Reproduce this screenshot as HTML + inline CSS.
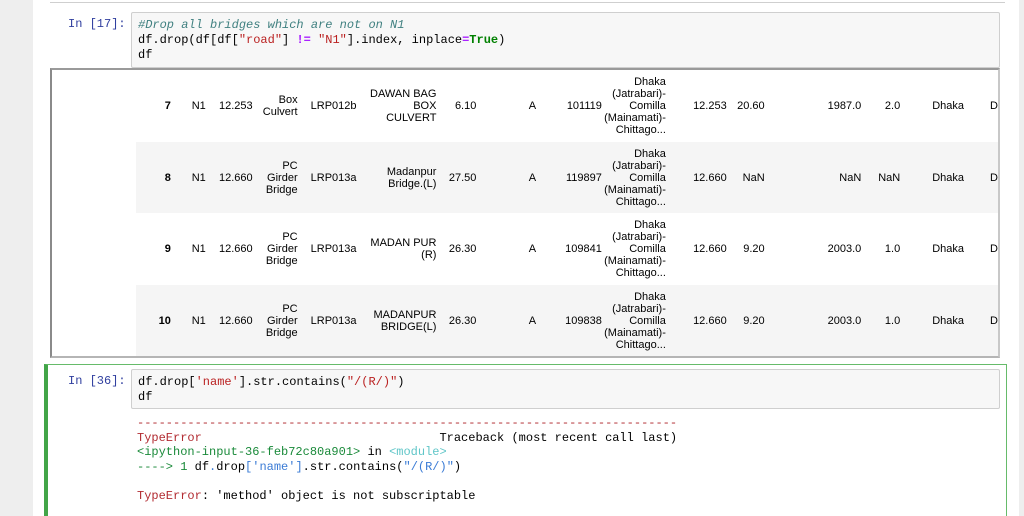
<!DOCTYPE html>
<html><head><meta charset="utf-8"><style>
*{margin:0;padding:0;box-sizing:border-box}
body{width:1024px;height:516px;overflow:hidden;background:#eeeeee;position:relative;font-family:"Liberation Sans",Arial,sans-serif}
#nb{position:absolute;left:33px;top:0;width:986px;height:516px;background:#fff}
.topline{position:absolute;left:50px;top:0;width:955px;height:3px;border-bottom:1px solid #cfcfcf}
.code{position:absolute;background:#f7f7f7;border:1px solid #cfcfcf;border-radius:2px;font-family:"Liberation Mono",monospace;font-size:12px;line-height:15px;color:#000;padding:5px 6px;white-space:pre}
.prompt{position:absolute;font-family:"Liberation Mono",monospace;font-size:12px;color:#303f9f;line-height:15px}
.cm{color:#408080;font-style:italic}
.s{color:#ba2121}.o{color:#aa22ff;font-weight:bold}.k{color:#008000;font-weight:bold}
#out{position:absolute;left:50px;top:68px;width:950px;height:290px;overflow:hidden;border-left:2px solid #8a8a8a;border-top:2px solid #9a9a9a;border-bottom:2px solid #b5b5b5;border-right:2px solid #c8c8c8;background:#fff}
table{position:absolute;left:84px;top:0;border-collapse:collapse;table-layout:fixed;font-size:11px;line-height:12px;color:#000}
td{text-align:right;vertical-align:middle;padding:0}
tr.g td{background:#f5f5f5}
td.i{font-weight:bold}
#cell2{position:absolute;left:44px;top:364px;width:963px;height:152px;border:1px solid #66bb6a;border-bottom:none;border-left:4px solid #42a548}
.err{position:absolute;left:137px;top:416px;font-family:"Liberation Mono",monospace;font-size:12px;line-height:14.5px;white-space:pre;color:#000}
.r{color:#b22b31}.c{color:#60c6c8}.b{color:#3a7bd5}.gr{color:#1a8a3a}
</style></head><body>
<div id="nb"></div>
<div class="topline"></div>
<div class="prompt" style="left:68px;top:17px">In [17]:</div>
<div class="code" style="left:131px;top:12px;width:869px;height:56px"><span class="cm">#Drop all bridges which are not on N1</span>
df.drop(df[df[<span class="s">"road"</span>] <span class="o">!=</span> <span class="s">"N1"</span>].index, inplace<span class="o">=</span><span class="k">True</span>)
df</div>
<div id="out">
<table>
<colgroup><col style="width:35px"><col style="width:35px"><col style="width:47px"><col style="width:45px"><col style="width:59px"><col style="width:80px"><col style="width:40px"><col style="width:60px"><col style="width:66px"><col style="width:64px"><col style="width:61px"><col style="width:38px"><col style="width:97px"><col style="width:39px"><col style="width:64px"><col style="width:34px"></colgroup>
<tr style="height:72px"><td class="i">7</td><td>N1</td><td>12.253</td><td>Box<br>Culvert</td><td>LRP012b</td><td>DAWAN BAG<br>BOX<br>CULVERT</td><td>6.10</td><td>A</td><td>101119</td><td>Dhaka<br>(Jatrabari)-<br>Comilla<br>(Mainamati)-<br>Chittago...</td><td>12.253</td><td>20.60</td><td>1987.0</td><td>2.0</td><td>Dhaka</td><td>D</td></tr>
<tr class="g" style="height:71px"><td class="i">8</td><td>N1</td><td>12.660</td><td>PC<br>Girder<br>Bridge</td><td>LRP013a</td><td>Madanpur<br>Bridge.(L)</td><td>27.50</td><td>A</td><td>119897</td><td>Dhaka<br>(Jatrabari)-<br>Comilla<br>(Mainamati)-<br>Chittago...</td><td>12.660</td><td>NaN</td><td>NaN</td><td>NaN</td><td>Dhaka</td><td>D</td></tr>
<tr style="height:72px"><td class="i">9</td><td>N1</td><td>12.660</td><td>PC<br>Girder<br>Bridge</td><td>LRP013a</td><td>MADAN PUR<br>(R)</td><td>26.30</td><td>A</td><td>109841</td><td>Dhaka<br>(Jatrabari)-<br>Comilla<br>(Mainamati)-<br>Chittago...</td><td>12.660</td><td>9.20</td><td>2003.0</td><td>1.0</td><td>Dhaka</td><td>D</td></tr>
<tr class="g" style="height:71px"><td class="i">10</td><td>N1</td><td>12.660</td><td>PC<br>Girder<br>Bridge</td><td>LRP013a</td><td>MADANPUR<br>BRIDGE(L)</td><td>26.30</td><td>A</td><td>109838</td><td>Dhaka<br>(Jatrabari)-<br>Comilla<br>(Mainamati)-<br>Chittago...</td><td>12.660</td><td>9.20</td><td>2003.0</td><td>1.0</td><td>Dhaka</td><td>D</td></tr>
</table>
</div>
<div id="cell2"></div>
<div class="prompt" style="left:68px;top:374px">In [36]:</div>
<div class="code" style="left:131px;top:369px;width:869px;height:40px">df.drop[<span class="s">'name'</span>].str.contains(<span class="s">"/(R/)"</span>)
df</div>
<div class="err"><span class="r">---------------------------------------------------------------------------</span>
<span class="r">TypeError</span>                                 Traceback (most recent call last)
<span class="gr">&lt;ipython-input-36-feb72c80a901&gt;</span> in <span class="c">&lt;module&gt;</span>
<span class="gr">----&gt; 1</span> df<span class="b">.</span>drop<span class="b">[</span><span class="b">'name'</span><span class="b">]</span>.str.contains(<span class="b">"/(R/)"</span>)

<span class="r">TypeError</span>: 'method' object is not subscriptable</div>
</body></html>
